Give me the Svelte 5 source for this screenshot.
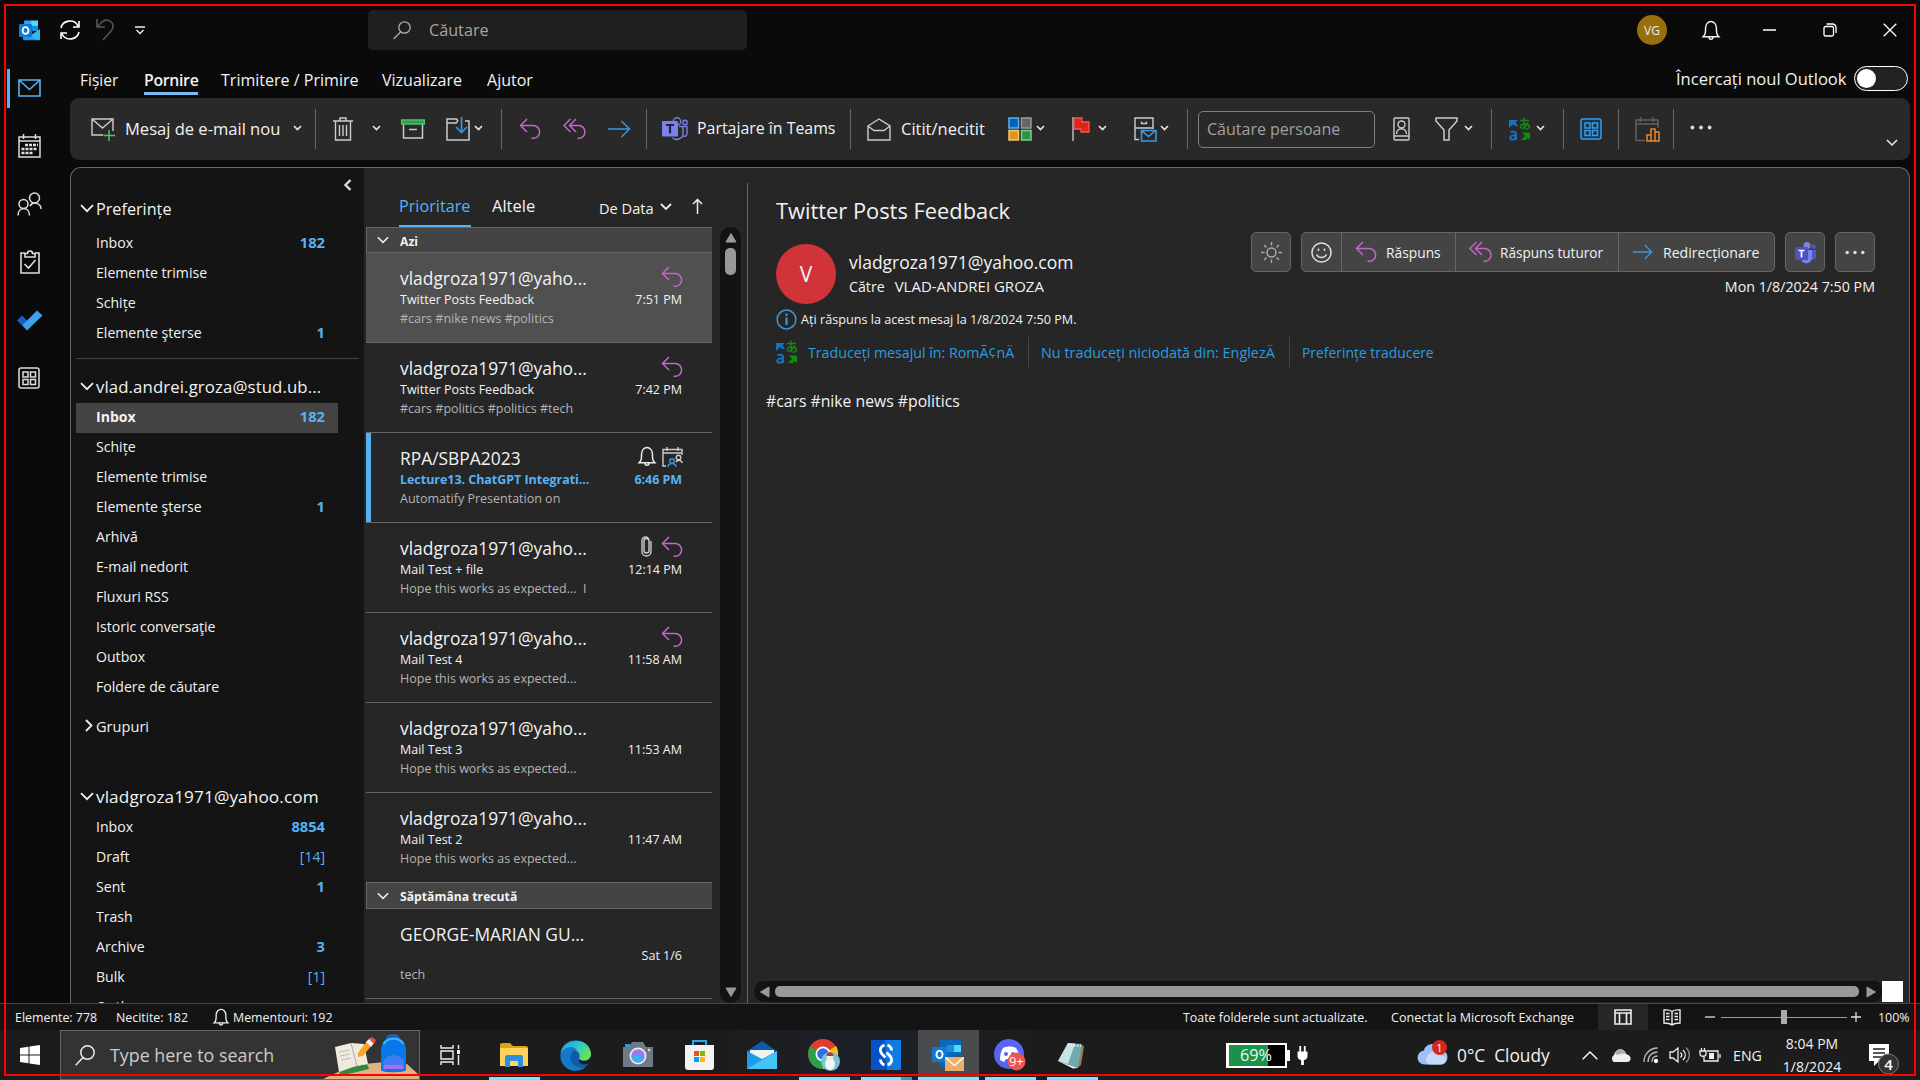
<script lang="ts">
  type Folder = { name: string; count?: string; plain?: boolean; active?: boolean };
  type Mail = { from: string; subject: string; preview: string; time: string; icons: string[]; selected?: boolean; unread?: boolean };

  const favourites: Folder[] = [
    { name: 'Inbox', count: '182' },
    { name: 'Elemente trimise' },
    { name: 'Schițe' },
    { name: 'Elemente şterse', count: '1' }
  ];
  const studFolders: Folder[] = [
    { name: 'Inbox', count: '182', active: true },
    { name: 'Schițe' },
    { name: 'Elemente trimise' },
    { name: 'Elemente şterse', count: '1' },
    { name: 'Arhivă' },
    { name: 'E-mail nedorit' },
    { name: 'Fluxuri RSS' },
    { name: 'Istoric conversaţie' },
    { name: 'Outbox' },
    { name: 'Foldere de căutare' }
  ];
  const yahooFolders: Folder[] = [
    { name: 'Inbox', count: '8854' },
    { name: 'Draft', count: '[14]', plain: true },
    { name: 'Sent', count: '1' },
    { name: 'Trash' },
    { name: 'Archive', count: '3' },
    { name: 'Bulk', count: '[1]', plain: true },
    { name: 'Outbox' }
  ];
  const today: Mail[] = [
    { from: 'vladgroza1971@yaho...', subject: 'Twitter Posts Feedback', preview: '#cars #nike news #politics', time: '7:51 PM', icons: ['reply'], selected: true },
    { from: 'vladgroza1971@yaho...', subject: 'Twitter Posts Feedback', preview: '#cars #politics #politics #tech', time: '7:42 PM', icons: ['reply'] },
    { from: 'RPA/SBPA2023', subject: 'Lecture13. ChatGPT Integrati...', preview: 'Automatify Presentation on', time: '6:46 PM', icons: ['bell', 'meeting'], unread: true },
    { from: 'vladgroza1971@yaho...', subject: 'Mail Test + file', preview: 'Hope this works as expected...  I', time: '12:14 PM', icons: ['clip', 'reply'] },
    { from: 'vladgroza1971@yaho...', subject: 'Mail Test 4', preview: 'Hope this works as expected...', time: '11:58 AM', icons: ['reply'] },
    { from: 'vladgroza1971@yaho...', subject: 'Mail Test 3', preview: 'Hope this works as expected...', time: '11:53 AM', icons: [] },
    { from: 'vladgroza1971@yaho...', subject: 'Mail Test 2', preview: 'Hope this works as expected...', time: '11:47 AM', icons: [] }
  ];
  const lastWeek: Mail[] = [
    { from: 'GEORGE-MARIAN GU...', subject: '', preview: 'tech', time: 'Sat 1/6', icons: [] }
  ];
</script>

{#snippet chev()}
  <svg class="chev" width="9" height="6" viewBox="0 0 9 6"><path d="M1 1l3.5 3.5L8 1" fill="none" stroke="#e8e8e8" stroke-width="1.6" /></svg>
{/snippet}

{#snippet bigChev()}
  <svg width="14" height="9" viewBox="0 0 14 9"><path d="M1 1.2l6 6 6-6" fill="none" stroke="#f0f0f0" stroke-width="1.8" /></svg>
{/snippet}

{#snippet reply()}
  <svg width="22" height="22" viewBox="0 0 22 22" fill="none" stroke="#c266c9" stroke-width="1.5"><path d="M8 1L1.5 7.5 8 14M1.5 7.5h12.7a6.3 6.3 0 010 12.8H12.5" /></svg>
{/snippet}

{#snippet replyAll()}
  <svg width="23" height="22" viewBox="0 0 23 22" fill="none" stroke="#c266c9" stroke-width="1.5"><path d="M7.5 1L1 7.5 7.5 14M13 1L6.5 7.5 13 14M6.5 7.5h9.2a6.2 6.4 0 010 12.8H14.5" /></svg>
{/snippet}

{#snippet forward(w: number)}
  <svg width={w} height="18" viewBox="0 0 23 18" fill="none" stroke="#3a96dd" stroke-width="1.5"><path d="M0 9h22M13.5 1l8 8-8 8" /></svg>
{/snippet}

{#snippet bell(w: number)}
  <svg width={w} height={w * 1.15} viewBox="0 0 18 21" fill="none" stroke="#eee" stroke-width="1.5"><path d="M1 17c2-2 2.5-3 2.5-9a5.5 6.5 0 0111 0c0 6 .5 7 2.5 9zM7 17.5a2 2 0 004 0" /></svg>
{/snippet}

{#snippet translate()}
  <svg width="22" height="24" viewBox="0 0 22 24" fill="none">
    <path d="M0 3h9L6.5 5.5 9 9H6L4.5 7 0 11z" fill="#1a6fc0" />
    <path d="M1.5 15.500c1.5-1.2 5.5-1.2 5.5 1.5v6M7 18.3c-7-.2-7 4.4-3.5 4.4 2 0 3.5-1.5 3.5-4" stroke="#1a6fc0" stroke-width="2" />
    <path d="M11 3.500h9M15 .5c-.5 4-.4 7 .8 11.500M19 5.500c-1 4-7 7.500-7.500 4.500S18 5.500 20 8.500c1 2-.5 3.500-3 4" stroke="#148a14" stroke-width="1.4" />
    <path d="M13 15.500h8V23l-2-2-2.500 2H12l4-4z" fill="#148a14" />
  </svg>
{/snippet}

{#snippet apps(color: string)}
  <svg width="22" height="22" viewBox="0 0 22 22" fill="none" stroke={color} stroke-width="1.5"><rect x="1" y="1" width="20" height="20" rx="2" /><path d="M5 5h5v5H5zM12.5 5h5v5h-5zM5 12.500h5v5H5zM12.500 12.500h5v5h-5z" /></svg>
{/snippet}

{#snippet outlookIcon(w: number)}
  <svg width={w} height={w} viewBox="0 0 32 32">
    <path d="M8 1h21v14H8z" fill="#1490df" /><path d="M18 1h11v8H18z" fill="#50d9ff" /><path d="M8 1h10v8H8z" fill="#28a8ea" /><path d="M18 9h11v8H18z" fill="#1490df" />
    <path d="M6 14l13 9 13-9v15a2 2 0 01-2 2H8a2 2 0 01-2-2z" fill="#1a9be8" /><path d="M32 14L14 25l16 6a2 2 0 002-2z" fill="#35b8f1" />
    <rect y="6" width="20" height="20" rx="1.500" fill="#0f78d4" /><ellipse cx="10" cy="16" rx="4.500" ry="5.200" fill="none" stroke="#fff" stroke-width="2.800" />
  </svg>
{/snippet}

{#snippet dots(w: number)}
  <svg width={w} height="5" viewBox="0 0 23 5" fill="#ddd"><circle cx="2.500" cy="2.500" r="2" /><circle cx="11.500" cy="2.500" r="2" /><circle cx="20.500" cy="2.500" r="2" /></svg>
{/snippet}

{#snippet triangle(kind: string)}
  <svg class="tri {kind}" width="12" height="10" viewBox="0 0 12 10"><path d="M6 .5l5 8.500H1z" fill="#999" stroke="#999" stroke-linejoin="round" /></svg>
{/snippet}

{#snippet folderList(items: Folder[])}
  {#each items as f}
    <div class="folder" class:active={f.active}>
      <span>{f.name}</span>
      {#if f.count}<span class="count" class:plain={f.plain}>{f.count}</span>{/if}
    </div>
  {/each}
{/snippet}

{#snippet mailRow(m: Mail)}
  <div class="mail" class:selected={m.selected} class:unread={m.unread}>
    <div class="from-row">
      <span class="from">{m.from}</span>
      <span class="mail-icons">
        {#each m.icons as icon}
          {#if icon === 'reply'}
            {@render reply()}
          {:else if icon === 'bell'}
            {@render bell(18)}
          {:else if icon === 'clip'}
            <svg class="clip" width="11" height="21" viewBox="0 0 11 21" fill="none" stroke="#ccc" stroke-width="1.400"><path d="M3 5v9.500a2.300 2.300 0 005 0V4.500a3.500 3.500 0 00-7 0V16a4.500 4 0 009 0V5M3 5a1.200 1.200 0 015 0" /></svg>
          {:else}
            <svg width="21" height="20" viewBox="0 0 21 20" fill="none" stroke="#ccc" stroke-width="1.400"><path d="M4 19H1V2.500h19V8M1 6h19M5 0v4M16 0v4" /><circle cx="16.500" cy="10.500" r="2.300" /><path d="M14 15c2-3 5-2 6.500 1" /><g stroke="#3a96dd"><circle cx="10" cy="14" r="2.300" /><path d="M6 20c0-4.500 8-4.500 8 0" /></g></svg>
          {/if}
        {/each}
      </span>
    </div>
    <div class="subject-row"><span>{m.subject}</span><span class="time">{m.time}</span></div>
    <div class="preview">{m.preview}</div>
  </div>
{/snippet}

<div class="screen">
  <header class="title-bar">
    {@render outlookIcon(21)}
    <svg width="20" height="20" viewBox="0 0 20 20" fill="none" stroke="#fff" stroke-width="1.600"><path d="M1 8A9 8.500 0 0118 6M19 1v6h-6M19 12A9 8.500 0 012 14M1 19v-6h6" /></svg>
    <svg width="18" height="22" viewBox="0 0 18 22" fill="none" stroke="#555" stroke-width="1.600"><path d="M1 0v8h8M1 8l5-5c4-4 11-1 11 4 0 4-2 5-10 14" /></svg>
    <svg width="10" height="9" viewBox="0 0 10 9" fill="none" stroke="#eee" stroke-width="1.400"><path d="M0 1h10M1.500 4L5 7.500 8.500 4" /></svg>
    <div class="search">
      <svg width="18" height="19" viewBox="0 0 18 19" fill="none" stroke="#aaa" stroke-width="1.300"><circle cx="11.500" cy="6.500" r="5.700" /><path d="M7.500 11L.7 18" /></svg>
      <span>Căutare</span>
    </div>
    <div class="user">VG</div>
    {@render bell(18)}
    <svg width="13" height="2" viewBox="0 0 13 2"><path d="M0 1h13" stroke="#fff" stroke-width="1.500" /></svg>
    <svg width="14" height="14" viewBox="0 0 14 14" fill="none" stroke="#fff" stroke-width="1.300"><rect x="1" y="3.500" width="9.500" height="9.500" rx="1.500" /><path d="M3.500 1h6a3.500 3.500 0 013.500 3.500V10" /></svg>
    <svg width="14" height="14" viewBox="0 0 14 14" stroke="#fff" stroke-width="1.300"><path d="M.7.7l12.600 12.600M13.300.7L.7 13.300" /></svg>
  </header>

  <div class="body">
    <nav class="rail">
      <div class="rail-item current"><svg width="23" height="18" viewBox="0 0 23 18" fill="none" stroke="#57b2f5" stroke-width="1.600"><path d="M1 1h21v16H1zM1 1l10.500 9.500L22 1" /></svg></div>
      <div class="rail-item"><svg width="23" height="24" viewBox="0 0 23 24" fill="none" stroke="#ddd" stroke-width="1.500"><path d="M1 3h21v20H1zM1 7h21M5.500 0v5M17.500 0v5" /><path d="M7 11h13M3.500 15h16M3.500 19h11" stroke-width="2.500" stroke-dasharray="3 1" /></svg></div>
      <div class="rail-item"><svg width="25" height="24" viewBox="0 0 25 24" fill="none" stroke="#ddd" stroke-width="1.500"><circle cx="6.500" cy="12" r="4.500" /><circle cx="17.500" cy="6" r="5" /><path d="M1 23.500c0-9.500 11.500-9.500 11.500 0M13 14c3-5 11-3 11 3" /></svg></div>
      <div class="rail-item"><svg width="20" height="24" viewBox="0 0 20 24" fill="none" stroke="#ddd" stroke-width="1.600"><path d="M5 3H1v20h18V3h-4M5 7V3.500h2.500a2.500 2.500 0 015 0H15V7zM4.500 14l4 4 7-8" /></svg></div>
      <div class="rail-item"><svg width="26" height="21" viewBox="0 0 26 21"><path d="M0 10.500L5 5.500l9 9-4.500 5.500z" fill="#1a5fc8" /><path d="M5.500 15L20 .5l5.500 5L10 20.500z" fill="#3ea2ee" /></svg></div>
      <div class="rail-item last">{@render apps('#ddd')}</div>
    </nav>

    <div class="main">
      <div class="tabs">
        <span>Fișier</span><span class="on">Pornire</span><span>Trimitere / Primire</span><span>Vizualizare</span><span>Ajutor</span>
        <span class="try">Încercați noul Outlook</span>
        <div class="toggle"><i></i></div>
      </div>

      <div class="ribbon">
        <svg width="24" height="23" viewBox="0 0 24 23" fill="none" stroke="#ccc" stroke-width="1.400"><path d="M12 17H1V1h21v12M1 1l10.500 9L22 1" /><path d="M18 12v11M12.500 17.500H24" stroke="#4fc968" /></svg>
        <span class="label new">Mesaj de e-mail nou</span>
        {@render chev()}
        <i class="rule"></i>
        <svg width="20" height="24" viewBox="0 0 20 24" fill="none" stroke="#ccc" stroke-width="1.400"><path d="M0 4h20M7 4V1h6v3M2.500 4v19h15V4M6.500 8v11M10 8v11M13.500 8v11" /></svg>
        {@render chev()}
        <svg width="24" height="20" viewBox="0 0 24 20" fill="none" stroke="#ccc" stroke-width="1.500"><path d="M2.500 5v14h19V5M8 10.500h8" /><path d="M.7 1h22.600v4H.7z" fill="#2f9c50" stroke="#4cc06c" /></svg>
        <svg width="24" height="24" viewBox="0 0 24 24" fill="none" stroke="#ccc" stroke-width="1.500"><path d="M12 4l-1.500-2H1v21h22V4h-4M1 6h9l2-2" /><path d="M15.500 0v15M10 10l5.500 5.500L21 10" stroke="#3a96dd" stroke-width="1.700" /></svg>
        {@render chev()}
        <i class="rule"></i>
        {@render reply()}
        {@render replyAll()}
        {@render forward(23)}
        <i class="rule"></i>
        <svg width="26" height="24" viewBox="0 0 26 24"><g fill="none" stroke="#7a7fe0" stroke-width="1.400"><circle cx="15" cy="4.500" r="3.700" /><circle cx="23" cy="5.500" r="2.200" /><path d="M17 9.500h4v8c0 4-8 7-10.500 3M22 9.500h3V16c0 2-1 3.500-3.500 3.500" /></g><rect y="4" width="16" height="15.500" rx="1" fill="#7b83eb" /><path d="M4 8h8M8 8v8.500" stroke="#20204a" stroke-width="2.200" /></svg>
        <span class="label">Partajare în Teams</span>
        <i class="rule"></i>
        <svg width="24" height="23" viewBox="0 0 24 23" fill="none" stroke="#ccc" stroke-width="1.400"><path d="M1 8L12 1l11 7v14H1zM1 8l6 4.500h10L23 8" /></svg>
        <span class="label read">Citit/necitit</span>
        <svg width="24" height="24" viewBox="0 0 24 24" stroke-width="1.500"><path d="M1 1h9.500v10H1z" fill="#0063b8" stroke="#5bb0ee" /><path d="M13.500 1H23v10h-9.500z" fill="#666" stroke="#999" /><path d="M1 13.500h9.500V23H1z" fill="#e39120" stroke="#f4c672" /><path d="M13.500 13.500H23V23h-9.500z" fill="#2d9442" stroke="#77cf88" /></svg>
        {@render chev()}
        <svg width="18" height="24" viewBox="0 0 18 24"><path d="M1 0v24" stroke="#bbb" stroke-width="1.500" /><path d="M2 1h8v4h7v10H9v-3H2z" fill="#dc2418" stroke="#f4555a" stroke-width="1.300" /></svg>
        {@render chev()}
        <svg width="23" height="25" viewBox="0 0 23 25" fill="none" stroke="#ccc" stroke-width="1.400"><path d="M5 22.500H1V1h18v11M1 11h18M7.500 4.500v2h5v-2" /><path d="M7.500 13.500h14.500V24H7.500zM7.500 13.500l7 6 7-6" stroke="#3a96dd" stroke-width="1.600" /></svg>
        {@render chev()}
        <i class="rule"></i>
        <div class="people">Căutare persoane</div>
        <svg width="17" height="24" viewBox="0 0 17 24" fill="none" stroke="#ccc" stroke-width="1.400"><rect x="1" y="1" width="15" height="22" rx="1" /><path d="M1 19h15M3.500 17c0-7 10-7 10 0" /><circle cx="8.500" cy="7.500" r="3.500" /></svg>
        <svg width="23" height="24" viewBox="0 0 23 24" fill="none" stroke="#ccc" stroke-width="1.500"><path d="M1 1h21v3l-8 9v10H9V13L1 4z" /></svg>
        {@render chev()}
        <i class="rule"></i>
        {@render translate()}
        {@render chev()}
        <i class="rule"></i>
        <span class="tile">{@render apps('#3d9ae0')}</span>
        <i class="rule"></i>
        <svg width="25" height="25" viewBox="0 0 25 25" fill="none" stroke="#606060" stroke-width="1.500"><path d="M10 23.500H1V3h22v8M1 7h22M5.500 0v5M18 0v5" /><path d="M12 24v-6h4v6zM16 24V12h4v12zM20 24v-9h4v9z" stroke="#e8862e" /></svg>
        <i class="rule"></i>
        <span class="more">{@render dots(22)}</span>
        <span class="collapse"><svg width="12" height="8" viewBox="0 0 12 8"><path d="M1 1l5 5 5-5" fill="none" stroke="#eee" stroke-width="1.500" /></svg></span>
      </div>

      <div class="panel">
        <aside class="folders">
          <div class="fold"><svg width="9" height="12" viewBox="0 0 9 12"><path d="M7.500 1l-5 5 5 5" fill="none" stroke="#ddd" stroke-width="2.400" /></svg></div>
          <div class="account first">{@render bigChev()}<span>Preferințe</span></div>
          <div class="group fav">{@render folderList(favourites)}</div>
          <div class="account second">{@render bigChev()}<span>vlad.andrei.groza@stud.ub...</span></div>
          <div class="group stud">{@render folderList(studFolders)}</div>
          <div class="groups"><svg width="8" height="13" viewBox="0 0 8 13"><path d="M1 1l5.500 5.500L1 12" fill="none" stroke="#f0f0f0" stroke-width="1.800" /></svg><span>Grupuri</span></div>
          <div class="account third">{@render bigChev()}<span>vladgroza1971@yahoo.com</span></div>
          <div class="group">{@render folderList(yahooFolders)}</div>
        </aside>

        <section class="list">
          <div class="list-head">
            <span class="focused">Prioritare</span><span class="other">Altele</span><span class="sort">De Data</span>
            <svg width="12" height="12" viewBox="0 -4 12 12"><path d="M1 1l5 5 5-5" fill="none" stroke="#eee" stroke-width="1.800" /></svg>
            <svg width="11" height="18" viewBox="0 -2 11 18"><path d="M5.500 16V1M1 6l4.500-4.500L10 6" fill="none" stroke="#eee" stroke-width="1.500" /></svg>
          </div>
          <div class="list-body">
            <div class="mails">
              <div class="band">{@render bigChev()}<b>Azi</b></div>
              {#each today as m}{@render mailRow(m)}{/each}
              <div class="band late">{@render bigChev()}<b>Săptămâna trecută</b></div>
              {#each lastWeek as m}{@render mailRow(m)}{/each}
            </div>
            <div class="vscroll">{@render triangle('up')}<i></i>{@render triangle('down')}</div>
          </div>
        </section>

        <section class="reading">
          <h1>Twitter Posts Feedback</h1>
          <div class="sender">
            <div class="avatar">V</div>
            <div class="who"><div class="address">vladgroza1971@yahoo.com</div><div class="to"><span>Către</span><span class="recipient">VLAD-ANDREI GROZA</span></div></div>
            <div class="actions">
              <div class="buttons">
                <div class="btn"><svg width="21" height="21" viewBox="0 0 21 21" fill="none" stroke="#aaa" stroke-width="1.400"><circle cx="10.500" cy="10.500" r="4.500" /><path d="M10.500 0v3.500M10.500 17.500V21M0 10.500h3.500M17.500 10.500H21M3 3l2.500 2.500M15.500 15.500L18 18M18 3l-2.500 2.500M5.500 15.500L3 18" /></svg></div>
                <div class="set">
                  <div class="seg smile"><svg width="21" height="21" viewBox="0 0 21 21" fill="none" stroke="#ddd" stroke-width="1.500"><circle cx="10.500" cy="10.500" r="9.500" /><path d="M5.500 12.500c2 4 8 4 10 0M7.500 6.500v2.500M13.500 6.500v2.500" /></svg></div>
                  <div class="seg r1">{@render reply()}<span>Răspuns</span></div>
                  <div class="seg r2">{@render replyAll()}<span>Răspuns tuturor</span></div>
                  <div class="seg r3">{@render forward(20)}<span>Redirecționare</span></div>
                </div>
                <div class="btn"><svg width="21" height="21" viewBox="0 0 21 21"><circle cx="12" cy="3.500" r="3.500" fill="#7b83eb" /><circle cx="18.500" cy="4.500" r="2.200" fill="#5059c9" /><path d="M15 8h6v6c0 3-2 4-5 4z" fill="#5059c9" /><path d="M6 8h11v7c0 8-10 8-11 2z" fill="#7b83eb" /><rect y="5" width="13" height="13" rx="1" fill="#4b53bc" /><path d="M3.500 8.500h6M6.500 8.500v7" stroke="#fff" stroke-width="1.700" /></svg></div>
                <div class="btn">{@render dots(20)}</div>
              </div>
              <div class="date">Mon 1/8/2024 7:50 PM</div>
            </div>
          </div>
          <div class="info"><svg width="21" height="21" viewBox="0 0 21 21" fill="none" stroke="#3a96dd"><circle cx="10.500" cy="10.500" r="9.400" stroke-width="1.500" /><path d="M10.500 4.500V7M10.500 8.500v7.500" stroke-width="2.200" /></svg><span>Ați răspuns la acest mesaj la 1/8/2024 7:50 PM.</span></div>
          <div class="translation">
            {@render translate()}<span class="into">Traduceți mesajul în: RomÃ¢nÄ</span><i></i><span class="never">Nu traduceți niciodată din: EnglezÄ</span><i></i><span>Preferințe traducere</span>
          </div>
          <div class="message"><span>#cars #nike news #politics</span></div>
          <div class="hscroll"><div class="track">{@render triangle('left')}<i></i>{@render triangle('right')}</div><b></b></div>
        </section>
      </div>
    </div>
  </div>

  <footer class="status">
    <span>Elemente: 778</span><span>Necitite: 182</span>{@render bell(16)}<span>Mementouri: 192</span>
    <span>Toate folderele sunt actualizate.</span><span class="server">Conectat la Microsoft Exchange</span>
    <div class="view"><svg width="18" height="16" viewBox="0 0 18 16" fill="none" stroke="#eee" stroke-width="1.600"><path d="M1 1h16v14H1zM1 4h16M5.500 4v11M12.500 4v11" /></svg></div>
    <svg width="18" height="17" viewBox="0 0 18 17" fill="none" stroke="#eee" stroke-width="1.400"><path d="M9 2.500C7 1 4 .7 1 1v13c3 0 6 .5 8 2 2-1.500 5-2 8-2V1c-3-.3-6 0-8 1.500zV16M3 4.500h3.500M3 7.500h3.500M3 10.500h3.500M11.500 4.500H15M11.500 7.500H15M11.500 10.500H15" /></svg>
    <svg width="10" height="10" viewBox="0 0 10 10"><path d="M0 5h10" stroke="#ddd" stroke-width="1.300" /></svg>
    <div class="zoom"><i></i></div>
    <svg width="10" height="10" viewBox="0 0 10 10"><path d="M0 5h10M5 0v10" stroke="#ddd" stroke-width="1.300" /></svg>
    <span>100%</span>
  </footer>

  <footer class="taskbar">
    <svg width="20" height="20" viewBox="0 0 20 20" fill="#fff"><path d="M0 3l8.500-1.200v7.700H0zM9.500 1.600L20 0v9.500H9.500zM0 10.500h8.500v7.700L0 17zM9.500 10.500H20V20L9.500 18.500z" /></svg>
    <div class="win-search">
      <svg width="20" height="21" viewBox="0 0 20 21" fill="none" stroke="#eee" stroke-width="1.500"><circle cx="12.500" cy="7.500" r="6.700" /><path d="M8 12.500L.7 20.300" /></svg>
      <span>Type here to search</span>
      <svg width="98" height="49" viewBox="0 0 98 49">
        <path d="M0 49L32 34l32-3 22 2 12 11v5z" fill="#e0b282" />
        <path d="M18 39l28-6 2 5-29 7z" fill="#328b3c" /><path d="M14 16l16-4 13 1 4 20-12 2-17 6z" fill="#eeeadd" /><path d="M30 12l6 23" stroke="#aaa" /><path d="M18 21l10-2M19 25l10-2M20 29l10-2" stroke="#bbb" />
        <path d="M37 22L46 10l5 4-9 11-5 1z" fill="#f5a623" /><path d="M45 11l4-4 5 4-4 5z" fill="#eee" /><path d="M48 8l3-2 4 3-2 4z" fill="#e74c3c" />
        <path d="M66 8c0-5 12-5 12 0" fill="none" stroke="#0871d8" stroke-width="2" /><path d="M60 39V20c0-19 25-19 25 0v19c0 3-25 3-25 0z" fill="#0878e8" /><path d="M62 38V31c2-9 19-9 21 0v7z" fill="#3f7df5" /><path d="M63 34h19v4H63z" fill="#b06cf0" /><path d="M62.500 13c4-7 16-7 20 0" fill="none" stroke="#48b1ff" stroke-width="2" />
      </svg>
    </div>
    <svg width="21" height="20" viewBox="0 0 21 20" fill="none" stroke="#eee" stroke-width="1.400"><path d="M1 0v3h12V0M1 20v-3h12v3M1 6h12v8H1zM18.500 0v4M18.500 10v10" /><path d="M18.500 5v4" stroke-width="3" /></svg>
    <div class="app run"><svg width="28" height="24" viewBox="0 0 28 24"><path d="M0 2a2 2 0 012-2h8l3 3h13a2 2 0 012 2v2H0z" fill="#e2a112" /><path d="M0 5h28v18H0z" fill="#ffd25c" /><path d="M5 24V14c0-1 1-2 2-2h14c1 0 2 1 2 2v10h-5v-6h-8v6z" fill="#2e8fe0" /></svg></div>
    <div class="app"><svg width="31" height="31" viewBox="0 0 31 31"><defs><linearGradient id="edge" x1="0" y1="0" x2="1" y2=".6"><stop stop-color="#1b9de2" /><stop offset=".6" stop-color="#36c9c4" /><stop offset="1" stop-color="#6be34a" /></linearGradient></defs><circle cx="15.500" cy="15.500" r="15.300" fill="#0d5cab" /><path d="M1 13C2-3 30-4 31 14c0 7-9 8-12 5 4-9-11-14-18-6z" fill="url(#edge)" /><path d="M1 13c4-7 12-8 16-3-10 1-10 18 8 18C13 35-1 28 1 13z" fill="#1479c9" /><path d="M19 19c3 3 10 3 12-2v5c-5 4-13 3-12-3z" fill="#1c1c1c" /></svg></div>
    <div class="app"><svg width="30" height="26" viewBox="0 0 30 26"><path d="M2 2h5v3H2z" fill="#1ba1e2" /><path d="M9 0h11l3 5h7v20H0V5h6z" fill="#6f7a86" /><circle cx="15" cy="14" r="8.500" fill="#e9edf2" /><circle cx="15" cy="14" r="6.800" fill="#9a7ae8" /><path d="M9 15c5-4 9 0 12 2-3 5-10 5-12-2z" fill="#37b4f2" /><circle cx="26" cy="8" r="1.200" fill="#ddd" /></svg></div>
    <div class="app"><svg width="29" height="30" viewBox="0 0 29 30"><path d="M8 7V1h13v6" fill="none" stroke="#28a8ea" stroke-width="2" /><path d="M0 5h29v22a3 3 0 01-3 3H3a3 3 0 01-3-3z" fill="#f3f3f3" /><path d="M9 11h5v5H9z" fill="#f25022" /><path d="M15 11h5v5h-5z" fill="#7fba00" /><path d="M9 17h5v5H9z" fill="#00a4ef" /><path d="M15 17h5v5h-5z" fill="#ffb900" /></svg></div>
    <div class="app"><svg width="30" height="28" viewBox="0 0 30 28"><path d="M0 10L15 0l15 10v9H0z" fill="#0a5ba8" /><path d="M3 9h24v8l-12 5-12-5z" fill="#f2f2f2" /><path d="M0 10l15 8 15-8v18H0z" fill="#1c9cea" /><path d="M30 10L0 28h30z" fill="#42c5f5" /></svg></div>
    <div class="app run"><svg width="32" height="32" viewBox="0 0 32 32"><circle cx="15" cy="15" r="15" fill="#e33b2e" /><path d="M15 15L28 7c5 8 1 22-13 23z" fill="#fbc116" /><path d="M15 15v15C3 30-3 18 2 7z" fill="#2d9f48" /><circle cx="15" cy="15" r="7.500" fill="#fff" /><circle cx="15" cy="15" r="5.800" fill="#2c6fe8" /><circle cx="22.500" cy="22.500" r="9.500" fill="#78c4d2" /><ellipse cx="22" cy="25" rx="5" ry="6" fill="#f2f5f5" /><circle cx="22" cy="17.500" r="3.500" fill="#f7e9dc" /><path d="M18.500 17c0-5 7-5 7 0" fill="#b33" /></svg></div>
    <div class="app run twin"><svg width="30" height="30" viewBox="0 0 30 30"><path d="M0 0h30v30H0z" fill="#0653c9" /><path d="M14 0h16v30H16z" fill="#0d7be5" /><path d="M13.500 5c-5 2-5 6-2.500 9l3.500 3.500M9.500 19.500c0 3 1.500 4.500 4 5.500M16.500 25c5-2 5-6 2.500-9l-3.500-3.500M20.500 10.500c0-3-1.500-4.500-4-5.500" fill="none" stroke="#fff" stroke-width="2.800" /></svg></div>
    <div class="app run lit"><svg width="32" height="31" viewBox="0 0 32 31"><path d="M8 0h21v15H8z" fill="#0c68bd" /><path d="M15 5h7v7h-7z" fill="#1490df" /><path d="M22 5h7v7h-7z" fill="#50d9ff" /><path d="M7 15h16v13H7z" fill="#0d63b0" /><path d="M0 7h15v15H0z" fill="#0f78d4" /><ellipse cx="7.500" cy="14.500" rx="3" ry="3.800" fill="none" stroke="#fff" stroke-width="2" /><path d="M13 17h19v14H13z" fill="#e9b06a" /><path d="M13.500 17.500l9 8 9-8" fill="none" stroke="#fff" stroke-width="1.500" /></svg></div>
    <div class="app run"><svg width="32" height="32" viewBox="0 0 32 32"><circle cx="15" cy="15" r="15" fill="#5865f2" /><path d="M9 9c4-2 9-2 13 0 2 3 4 7 4 12l-4 2-2-3h-8l-2 3-4-2c0-5 1-9 3-12z" fill="#fff" /><circle cx="12" cy="15" r="2" fill="#5865f2" /><circle cx="19" cy="15" r="2" fill="#5865f2" /><circle cx="22.500" cy="22.500" r="9" fill="#ef5350" /><text x="22.500" y="27" text-anchor="middle" font-size="12.500" fill="#fff">9+</text></svg></div>
    <div class="app run"><svg width="28" height="27" viewBox="0 0 28 27"><path d="M22 3l4 1-3 19-4 3z" fill="#9a7f50" /><path d="M10 1l14 1-4 24L0 19z" fill="#6fa9b1" /><path d="M10 1l7 .5L10 22 0 19z" fill="#c9e2e4" /><path d="M10 3l13 1" stroke="#eee" stroke-width="2" stroke-dasharray="1.500 1.500" /><path d="M0 19l20 7-5 .5z" fill="#f2f2f2" /></svg></div>
    <div class="battery"><div class="cell"><span>69%</span></div><i></i></div>
    <svg width="11" height="19" viewBox="0 0 11 21" fill="#fff"><path d="M2 0h2v6h3V0h2v6h2v5c0 3-2 4-4 4.500V21H4v-5.500C2 15 0 14 0 11V6h2z" /></svg>
    <svg class="cloud" width="31" height="25" viewBox="0 0 31 25"><path d="M8 24.500a7 7 0 01-1-14c2-9 17-8 18 0 8 1 7 14-1 14z" fill="#9fc0f5" /><path d="M12 24.500a7 6 0 010-10c3-5 10-4 12 1 7 0 6 9 0 9z" fill="#c6dafa" /><circle cx="22.500" cy="7.500" r="7.500" fill="#cf2a20" /><text x="22.500" y="11.500" text-anchor="middle" font-size="11" fill="#fff">1</text></svg>
    <span class="weather">0°C&nbsp; Cloudy</span>
    <svg width="16" height="9" viewBox="0 0 16 9"><path d="M.7 8.300L8 1l7.300 7.300" fill="none" stroke="#fff" stroke-width="1.400" /></svg>
    <svg width="21" height="13" viewBox="0 0 21 13"><path d="M4 13a4 4 0 010-7C6-2 15-1 16 5c6 1 6 8 1 8z" fill="#eee" /><path d="M5 5c2-7 10-5 11 0-5-2-7 2-11 0z" fill="#aaa" /></svg>
    <svg width="15" height="16" viewBox="0 0 15 16" fill="none" stroke="#bbb" stroke-width="1.300"><path d="M1 15C1 7 7 1 14.500 1M5 15c0-6 4-10 9.500-10M9 15c0-4 2-6 5.500-6" /><circle cx="13" cy="14" r="1.500" fill="#fff" stroke="#fff" /></svg>
    <svg width="21" height="18" viewBox="0 0 21 18" fill="none" stroke="#eee" stroke-width="1.300"><path d="M1 6h3l5-4v14l-5-4H1zM11.500 6.500c1.500 1.500 1.500 3.500 0 5M14 4c3 3 3 7 0 10" /><path d="M17 1.500c4.500 4.500 4.500 10.500 0 15" stroke="#888" /></svg>
    <svg width="21" height="14" viewBox="0 0 21 14" fill="none" stroke="#eee" stroke-width="1.300"><path d="M7 3h11v10H4V9M20 6v4M0 3h6v3c0 3-6 3-6 0zM1.500 0v3M4.500 0v3" /><path d="M9 5h5v6H9z" fill="#eee" stroke="none" /></svg>
    <span class="lang">ENG</span>
    <div class="clock"><span>8:04 PM</span><span>1/8/2024</span></div>
    <svg class="notes" width="31" height="32" viewBox="0 0 31 32"><path d="M0 0h20v17H10l-5 5v-5H0z" fill="#fff" /><path d="M4 5h12M4 9h12M4 13h9" stroke="#222" stroke-width="1.400" /><circle cx="19.500" cy="20" r="10" fill="#333" stroke="#777" /><text x="19.500" y="25.500" text-anchor="middle" font-size="15" font-weight="600" fill="#fff">4</text></svg>
  </footer>

  <div class="outline"></div>
</div>

<style>
  :global(body) { background: #0a0a0a; overflow: hidden; }
  .screen { position: relative; width: 1920px; height: 1080px; display: flex; flex-direction: column; overflow: hidden; background: #0a0a0a; color: #f2f2f2; font-family: "Open Sans", "Noto Sans", sans-serif; font-size: 14px; white-space: nowrap; }
  svg { display: block; flex: none; overflow: visible; }
  i { font-style: normal; }
  .outline { position: absolute; left: 4px; top: 4px; width: 1912px; height: 1072px; box-sizing: border-box; border: 2px solid #f00; pointer-events: none; }

  .title-bar { height: 60px; flex: none; box-sizing: border-box; padding-left: 19px; display: grid; align-items: center; grid-template-columns: 41px 36px 39px 233px 1269px 65px 61px 60px 60px 1fr; }
  .search { width: 379px; height: 40px; box-sizing: border-box; border-radius: 5px; background: #1f1f1f; display: flex; align-items: center; gap: 18px; padding-left: 25px; color: #a6a6a6; font-size: 16.200px; }
  .user { width: 30px; height: 30px; border-radius: 50%; background: #986f0b; color: #eee; font-size: 12px; display: grid; place-items: center; }

  .body { display: flex; height: 943px; flex: none; }
  .rail { width: 70px; flex: none; margin-top: -1px; }
  .rail-item { height: 58px; width: 59px; display: flex; align-items: center; justify-content: center; box-sizing: border-box; }
  .rail-item.last { padding-right: 2px; }
  .current { background: linear-gradient(#57b2f5, #57b2f5) 7px 10px / 3px 39px no-repeat; }
  .main { flex: 1; min-width: 0; display: flex; flex-direction: column; }
  .tabs { height: 38px; flex: none; padding-left: 10px; display: grid; grid-template-columns: 64px 77px 161px 105px 1189px 178px 1fr; align-items: start; font-size: 16.050px; line-height: 41px; }
  .tabs span:first-child { font-size: 15.500px; }
  .tabs .on { font-weight: 600; font-size: 15.800px; letter-spacing: -.3px; justify-self: start; height: 32px; border-bottom: 3px solid #78bdf6; }
  .tabs .try { line-height: 38px; font-size: 16.550px; }
  .toggle { width: 54px; height: 25px; margin-top: 6px; box-sizing: border-box; border: 1.500px solid #fff; border-radius: 13px; background: #222; display: flex; align-items: center; padding-left: 2px; }
  .toggle i { width: 19px; height: 19px; border-radius: 50%; background: #fff; }

  .ribbon { height: 62px; width: 1840px; flex: none; box-sizing: border-box; background: #292929; border-radius: 9px; padding-left: 21px; display: grid; align-items: center; grid-template-columns: 34px 168px 22px 18px 39px 29px 45px 28px 27px 18px 44px 45px 38px 16px 35px 153px 17px 34px 107px 28px 36px 26px 36px 26px 27px 11px 195px 42px 29px 27px 18px 27px 27px 17px 38px 17px 38px 17px 196px 1fr; }
  .chev { margin-bottom: 3px; }
  .label { font-size: 15.900px; padding-bottom: 2px; }
  .new { font-size: 16.550px; }
  .read { font-size: 16.500px; }
  .rule { width: 1px; height: 40px; background: #666; }
  .people { width: 177px; height: 37px; box-sizing: border-box; border: 1px solid #808080; border-radius: 5px; padding-left: 8px; line-height: 35px; font-size: 16px; color: #a0a0a0; }
  .more { padding-bottom: 4px; }
  .collapse { padding-top: 28px; }
  .tile svg { background: #123955; border-radius: 3px; }

  .panel { margin-top: 7px; width: 1840px; flex: 1; min-height: 0; box-sizing: border-box; border: 1px solid #666; border-bottom: 0; border-radius: 11px 11px 0 0; display: flex; overflow: hidden; background: #262626; }
  .folders { width: 293px; flex: none; background: #141414; overflow: hidden; }
  .fold { height: 33px; display: flex; justify-content: flex-end; align-items: center; padding-right: 12px; }
  .account { box-sizing: border-box; height: 28px; display: flex; align-items: center; padding-left: 9px; gap: 2px; font-size: 16.800px; letter-spacing: .1px; }
  .first { height: 27px; padding-bottom: 12px; font-size: 16.200px; letter-spacing: 0; }
  .fav { padding-bottom: 10px; border-bottom: 1px solid #444; margin: 0 5px; }
  .fav .folder { margin: 0; }
  .second { margin-top: 13px; height: 31px; padding-bottom: 3px; }
  .third { height: 29px; margin-top: 42px; font-size: 17.200px; padding-bottom: 3px; }
  .groups { height: 30px; margin-top: 9px; margin-bottom: -1px; padding-bottom: 3px; box-sizing: border-box; display: flex; align-items: center; gap: 3px; padding-left: 14px; font-size: 14.600px; }
  .folder { height: 30px; width: 262px; box-sizing: border-box; margin-left: 5px; padding: 0 13px 2px 20px; display: flex; align-items: center; justify-content: space-between; font-size: 14.100px; }
  .stud .folder { padding-bottom: 4px; }
  .folder.active { background: #444; font-weight: 700; }
  .count { color: #57b2f5; font-weight: 700; font-size: 14.700px; }
  .count.plain { font-weight: 400; font-size: 14px; }

  .list { width: 383px; flex: none; display: flex; flex-direction: column; }
  .list-head { height: 59px; flex: none; box-sizing: border-box; padding: 15px 0 0 35px; display: grid; grid-template-columns: 93px 107px 61px 32px 1fr; align-items: center; }
  .focused { justify-self: start; height: 44px; line-height: 46px; box-sizing: border-box; font-size: 16.200px; color: #57b2f5; border-bottom: 2px solid #57b2f5; padding-right: 1px; }
  .other { font-size: 16.500px; padding-top: 1px; }
  .sort { font-size: 14.600px; padding-top: 6px; }
  .list-body { flex: 1; min-height: 0; display: flex; justify-content: space-between; padding-left: 2px; }
  .mails { width: 346px; }
  .band { height: 26px; box-sizing: border-box; background: #444; border: 1px solid #666; border-right: 0; display: flex; align-items: center; padding-left: 10px; gap: 10px; font-size: 12.200px; }
  .band b { padding-top: 2px; }
  .late { border-top: 0; }
  .band svg { width: 12px; height: 8px; margin-right: 1px; }
  .mail { height: 90px; box-sizing: border-box; border-bottom: 1px solid #666; padding: 14px 30px 0 34px; }
  .mail.selected { background: #505050; }
  .mail.unread { background: linear-gradient(#57b2f5, #57b2f5) 0 0 / 5px 100% no-repeat; }
  .from-row, .subject-row { display: flex; justify-content: space-between; }
  .from-row { height: 23px; line-height: 22px; font-size: 17.400px; }
  .mail-icons { display: flex; gap: 6px; align-items: center; height: 19px; margin-right: -1px; }
  .clip { margin-right: 3px; }
  .subject-row { height: 19px; line-height: 19px; font-size: 12.500px; }
  .unread .subject-row { color: #57b2f5; font-weight: 700; letter-spacing: -.04px; }
  .preview { height: 19px; line-height: 19px; font-size: 12.500px; color: #b4b4b4; white-space: pre; }
  .vscroll { width: 21px; margin-right: 6px; box-sizing: border-box; padding: 6px 0; border-radius: 10px; background: #131313; display: flex; flex-direction: column; align-items: center; }
  .vscroll i { width: 11px; height: 27px; margin: 5px 0 auto; border-radius: 5px; background: #999; }
  .down { transform: rotate(180deg); }
  .left { transform: rotate(-90deg); }
  .right { transform: rotate(90deg); }

  .reading { flex: 1; min-width: 0; margin-top: 15px; border-left: 1px solid #666; display: flex; flex-direction: column; padding-left: 6px; }
  h1 { margin: 12px 0 0 22px; height: 34px; line-height: 31px; font-size: 21.850px; font-weight: 400; }
  .sender { height: 78px; display: flex; padding: 0 34px 0 22px; }
  .avatar { width: 60px; height: 60px; margin-top: 15px; border-radius: 50%; background: #d13438; font-size: 21px; display: grid; place-items: center; }
  .who { margin: 21px auto 0 13px; }
  .address { font-size: 17.500px; height: 26px; line-height: 24px; }
  .to { font-size: 14.200px; height: 22px; line-height: 21px; display: flex; align-items: baseline; gap: 10px; }
  .recipient { font-size: 15px; }
  .actions { margin-top: 3px; }
  .buttons { display: flex; gap: 10px; }
  .btn, .set { height: 40px; box-sizing: border-box; border: 1px solid #666; border-radius: 5px; background: #444; }
  .btn { width: 40px; display: grid; place-items: center; }
  .set { width: 474px; display: flex; }
  .seg { box-sizing: border-box; display: flex; align-items: center; gap: 9px; font-size: 13.800px; padding-left: 13px; border-right: 1px solid #666; }
  .seg:last-child { border: 0; }
  .smile { width: 40px; padding-left: 9px; }
  .r1 { width: 114px; }
  .r2 { width: 163px; font-size: 13.600px; gap: 8px; }
  .r3 { flex: 1; gap: 10px; font-size: 14.100px; padding-left: 14px; }
  .date { text-align: right; line-height: 30px; font-size: 14.250px; }
  .info { height: 24px; display: flex; align-items: center; gap: 4px; padding-left: 22px; font-size: 12.650px; }
  .translation { height: 42px; margin-bottom: -2px; display: grid; align-items: center; padding-left: 22px; grid-template-columns: 32px 220px 13px 248px 13px 1fr; color: #2a9de0; font-size: 13.900px; }
  .into { font-size: 14.200px; }
  .never { font-size: 14.400px; }
  .translation i { width: 1px; height: 30px; background: #444; }
  .message { flex: 1; padding: 18px 0 0 12px; font-size: 15.750px; }
  .message span { display: inline-block; line-height: 24px; }
  .hscroll { height: 22px; display: flex; }
  .track { width: 1128px; height: 21px; border-radius: 10px 8px 8px 10px; background: #131313; display: flex; align-items: center; justify-content: space-between; padding: 0 5px; box-sizing: border-box; }
  .track i { width: 1084px; height: 11px; border-radius: 5px; background: #999; margin: 0 auto 0 4px; }
  .hscroll b { width: 21px; height: 21px; background: #fff; }

  .status { height: 27px; flex: none; box-sizing: border-box; border-top: 1px solid #444; background: #141414; padding-left: 15px; display: grid; align-items: center; font-size: 12.400px; grid-template-columns: 101px 97px 20px 950px 208px 207px 65px 42px 16px 130px 27px 1fr; }
  .server { font-size: 12.550px; }
  .view { width: 50px; height: 26px; background: #262626; display: grid; place-items: center; }
  .zoom { width: 126px; height: 14px; background: linear-gradient(#999, #999) 0 50% / 100% 1px no-repeat; display: flex; justify-content: center; }
  .zoom i { width: 6px; background: #aaa; }

  .taskbar { height: 50px; flex: none; box-sizing: border-box; background: linear-gradient(90deg, #1c1c1c 38%, #1c202a 44%, #1c1c1c 54%); padding-left: 20px; display: grid; align-items: center; grid-template-columns: 40px 380px 44px 62px 62px 62px 62px 62px 62px 62px 62px 62px 184px 71px 120px 40px 125px 28px 33px 26px 31px 33px 39px 97px 1fr; }
  .win-search { width: 360px; height: 50px; box-sizing: border-box; border: 1px solid #666; background: #333; display: flex; align-items: center; padding-left: 14px; overflow: hidden; font-size: 17.850px; color: #ccc; }
  .win-search span { margin: 0 auto 0 15px; }
  .app { width: 61px; height: 50px; box-sizing: border-box; padding-right: 2px; display: flex; align-items: center; justify-content: center; }
  .run { background: linear-gradient(#76e6f9, #76e6f9) 5px 100% / 51px 3px no-repeat; }
  .twin { background-image: linear-gradient(90deg, #76e6f9 40px, #4b98a4 40px); }
  .lit { background: linear-gradient(#76e6f9, #76e6f9) 0 100% / 61px 3px no-repeat #4a4b4d; }
  .battery { display: flex; align-items: center; }
  .cell { width: 61px; height: 25px; box-sizing: border-box; border: 2px solid #fff; border-left-width: 3px; background: linear-gradient(90deg, #179447 39px, #000 39px); font-size: 16.300px; line-height: 20px; padding-left: 11px; }
  .battery i { width: 3px; height: 11px; background: #fff; }
  .cloud { margin-top: -6px; }
  .weather { font-size: 17.300px; }
  .lang { font-size: 14.200px; }
  .clock { width: 80px; display: flex; flex-direction: column; text-align: center; font-size: 14px; line-height: 23px; }
  .notes { padding-top: 10px; }
</style>
